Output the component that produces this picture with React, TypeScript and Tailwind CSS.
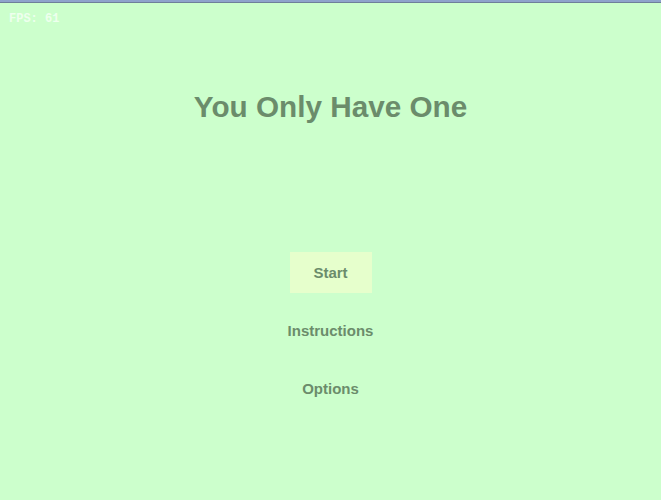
export default function App() {
  return (
    <div className="relative h-[500px] w-[661px] overflow-hidden bg-[#ccffcc] font-['Liberation_Sans',Arial,sans-serif]">
      <div className="h-[2px] bg-[#8fa3cc]" />
      <div className="h-px bg-[#6f7f9a]" />

      {/* FPS counter */}
      <div className="absolute left-[9px] top-[13px] font-['Liberation_Mono',monospace] text-[12px] font-bold leading-none text-[#eeffee]">
        FPS: 61
      </div>

      <div className="flex flex-col items-center">
        <h1 className="mt-[86px] text-[29.7px] font-bold leading-[36px] text-[#6b8c6b]">You Only Have One</h1>

        <div className="mt-[127px] flex flex-col items-center">
          <button className="h-[41px] w-[82px] bg-[#e6ffcc] pt-px text-[15px] font-bold text-[#6b8c6b]">Start</button>
          <button className="mt-[17px] h-[41px] px-2 pt-px text-[15px] font-bold text-[#6b8c6b]">Instructions</button>
          <button className="mt-[17px] h-[41px] px-2 pt-px text-[15px] font-bold text-[#6b8c6b]">Options</button>
        </div>
      </div>
    </div>
  );
}
